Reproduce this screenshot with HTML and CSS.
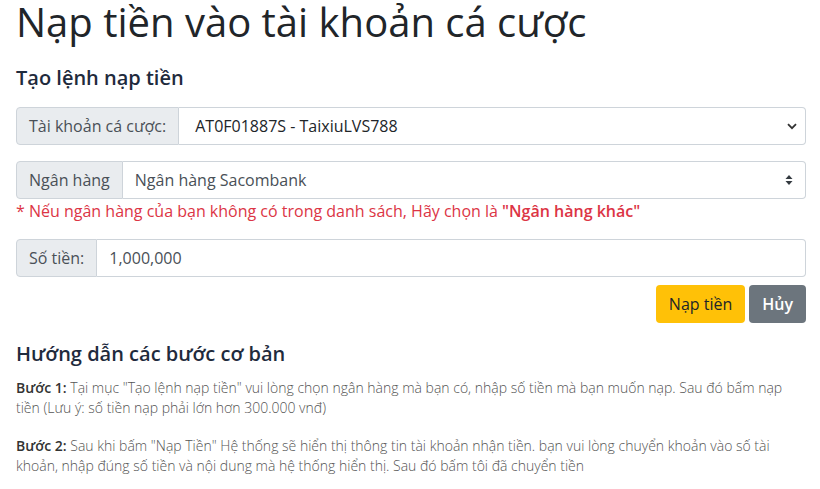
FILE: index.html
```html
<!DOCTYPE html>
<html lang="vi">
<head>
    <meta charset="UTF-8">
    <meta name="viewport" content="width=device-width, initial-scale=1.0">
    <title>Nạp tiền</title>
    <link rel="stylesheet" href="styles.css">
</head>
<body>
    <div class="container">
        <h1 class="page-title">Nạp tiền vào tài khoản cá cược</h1>

        <h2 class="section-title">Tạo lệnh nạp tiền</h2>

        <div class="input-group first">
            <span class="addon">Tài khoản cá cược:</span>
            <div class="control select native">
                <span>AT0F01887S - TaixiuLVS788</span>
                <svg width="10" height="7" viewBox="0 0 10 7"><path d="M1 1.2 5 5.2 9 1.2" fill="none" stroke="#333" stroke-width="1.8"/></svg>
            </div>
        </div>

        <div class="input-group">
            <span class="addon">Ngân hàng</span>
            <div class="control select">
                <span>Ngân hàng Sacombank</span>
                <svg width="8" height="10" viewBox="0 0 8 10"><path d="M4 0 7.5 4H.5zM4 10 .5 6h7z" fill="#343a40"/></svg>
            </div>
        </div>
        <p class="note">* Nếu ngân hàng của bạn không có trong danh sách, Hãy chọn là <b>"Ngân hàng khác"</b></p>

        <div class="input-group amount">
            <span class="addon">Số tiền:</span>
            <div class="control">1,000,000</div>
        </div>

        <div class="actions">
            <button class="btn btn-warning">Nạp tiền</button>
            <button class="btn btn-secondary">Hủy</button>
        </div>

        <h2 class="section-title guide">Hướng dẫn các bước cơ bản</h2>
        <p class="step"><b>Bước 1:</b> Tại mục "Tạo lệnh nạp tiền" vui lòng chọn ngân hàng mà bạn có, nhập số tiền mà bạn muốn nạp. Sau đó bấm nạp tiền (Lưu ý: số tiền nạp phải lớn hơn 300.000 vnđ)</p>
        <p class="step"><b>Bước 2:</b> Sau khi bấm "Nạp Tiền" Hệ thống sẽ hiển thị thông tin tài khoản nhận tiền. bạn vui lòng chuyển khoản vào số tài khoản, nhập đúng số tiền và nội dung mà hệ thống hiển thị. Sau đó bấm tôi đã chuyển tiền</p>
    </div>
</body>
</html>
```

FILE: styles.css
```css
body, html {
    margin: 0;
    padding: 0;
    font-family: 'Open Sans', 'Noto Sans', sans-serif;
    background-color: #fff;
    color: #212529;
    font-size: 16px;
}
.container {
    padding: 0 14px 0 16px;
}
.page-title {
    margin: -2px 0 0;
    font-size: 40px;
    font-weight: 400;
    line-height: 48px;
    color: #212529;
}
.section-title {
    margin: 20px 0 0;
    font-size: 20px;
    font-weight: 600;
    line-height: 24px;
    color: #1f2b3d;
}
.input-group {
    display: flex;
    height: 38px;
    margin-top: 16px;
}
.input-group.first {
    margin-top: 17px;
}
.input-group.amount {
    margin-top: 16px;
}
.addon {
    display: flex;
    align-items: center;
    padding: 0 12px;
    background-color: #e9ecef;
    border: 1px solid #ced4da;
    border-radius: 4px 0 0 4px;
    color: #495057;
    white-space: nowrap;
}
.control {
    flex: 1;
    display: flex;
    align-items: center;
    padding: 0 12px;
    border: 1px solid #ced4da;
    border-left: 0;
    border-radius: 0 4px 4px 0;
    color: #495057;
}
.select {
    justify-content: space-between;
}
.select.native {
    padding-left: 16px;
    color: #212529;
    padding-right: 8px;
}
.select svg {
    flex-shrink: 0;
}
.note {
    margin: 0;
    color: #dc3545;
    line-height: 24px;
}
.note b {
    font-weight: 600;
}
.actions {
    display: flex;
    justify-content: flex-end;
    gap: 4px;
    margin-top: 8px;
}
.btn {
    height: 38px;
    padding: 0 12px;
    border: 1px solid transparent;
    border-radius: 4px;
    font-family: inherit;
    font-size: 16px;
}
.btn-warning {
    background-color: #ffc107;
    color: #212529;
}
.btn-secondary {
    background-color: #6c757d;
    color: #fff;
    font-weight: 600;
}
.guide {
    margin-top: 19px;
}
.step {
    margin: 12px 0 18px;
    font-size: 14px;
    font-weight: 300;
    line-height: 20px;
    color: #555;
}
.step + .step {
    margin-top: 0;
}
.step b {
    font-weight: 600;
    color: #333;
}
```
